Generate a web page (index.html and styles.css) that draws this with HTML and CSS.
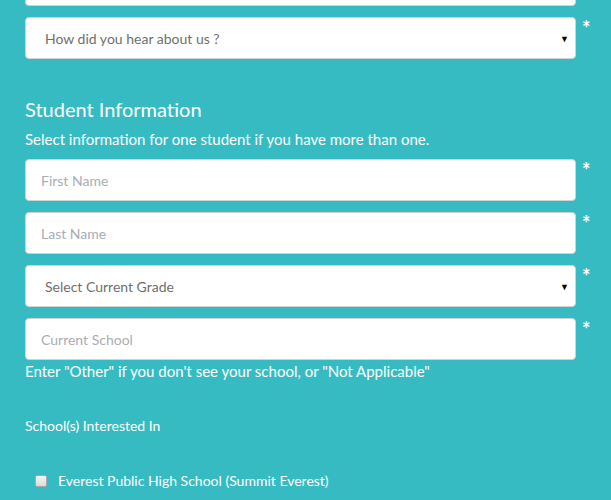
FILE: index.html
```html
<!DOCTYPE html>
<html>
<head>
<meta charset="utf-8">
<link rel="stylesheet" href="styles.css">
</head>
<body>
<form class="form">
  <div class="row">
    <input class="field" type="text" placeholder="">
  </div>
  <div class="row">
    <div class="select"><span>How did you hear about us ?</span><span class="caret">&#9660;</span></div>
    <span class="req">*</span>
  </div>

  <h2 class="heading">Student Information</h2>
  <p class="sub">Select information for one student if you have more than one.</p>

  <div class="row">
    <input class="field" type="text" placeholder="First Name">
    <span class="req">*</span>
  </div>
  <div class="row">
    <input class="field" type="text" placeholder="Last Name">
    <span class="req">*</span>
  </div>
  <div class="row">
    <div class="select"><span>Select Current Grade</span><span class="caret">&#9660;</span></div>
    <span class="req">*</span>
  </div>
  <div class="row row-last">
    <input class="field" type="text" placeholder="Current School">
    <span class="req">*</span>
  </div>
  <p class="help">Enter "Other" if you don't see your school, or "Not Applicable"</p>

  <p class="label">School(s) Interested In</p>

  <label class="check"><span class="box"></span>Everest Public High School (Summit Everest)</label>
</form>
</body>
</html>
```

FILE: styles.css
```css
html, body {
  margin: 0;
  padding: 0;
  background: #37bbc3;
  font-family: "Lato", "Liberation Sans", sans-serif;
  color: #ffffff;
  overflow: hidden;
}

.form {
  margin-top: -36px;
  padding-left: 25px;
  display: flex;
  flex-direction: column;
}

.row {
  display: flex;
  align-items: flex-start;
  margin-bottom: 11px;
}

.row-last {
  margin-bottom: 0;
}

.field,
.select {
  box-sizing: border-box;
  width: 551px;
  height: 42px;
  border: 1px solid #cfd3d4;
  border-radius: 4px;
  background: #ffffff;
  font-family: "Lato", "Liberation Sans", sans-serif;
  font-size: 14px;
  padding: 0 15px;
  outline: none;
  margin: 0;
}

.field::placeholder {
  color: #aaadb3;
}

.select {
  display: flex;
  align-items: center;
  justify-content: space-between;
  padding: 0 6px 0 19px;
  color: #6f6f6f;
}

.caret {
  color: #000;
  font-size: 9px;
}

.req {
  margin-left: 6px;
  margin-top: 2px;
  font-size: 20px;
  font-weight: bold;
  line-height: 19px;
}

.heading {
  margin: 26px 0 0;
  font-weight: normal;
  font-size: 20px;
  line-height: 26px;
}

.sub {
  margin: 8px 0 11px;
  font-size: 15px;
  line-height: 18px;
}

.help {
  margin: 2px 0 0;
  font-size: 15px;
  line-height: 18px;
}

.label {
  margin: 38px 0 0;
  font-size: 14px;
  line-height: 16px;
}

.check {
  display: flex;
  align-items: center;
  margin: 38px 0 0 10px;
  font-size: 14px;
  line-height: 18px;
}

.box {
  box-sizing: border-box;
  width: 12px;
  height: 12px;
  border: 1px solid #a9a9a9;
  border-radius: 2px;
  background: linear-gradient(#f4f4f4, #dcdcdc);
  margin-right: 11px;
}
```
